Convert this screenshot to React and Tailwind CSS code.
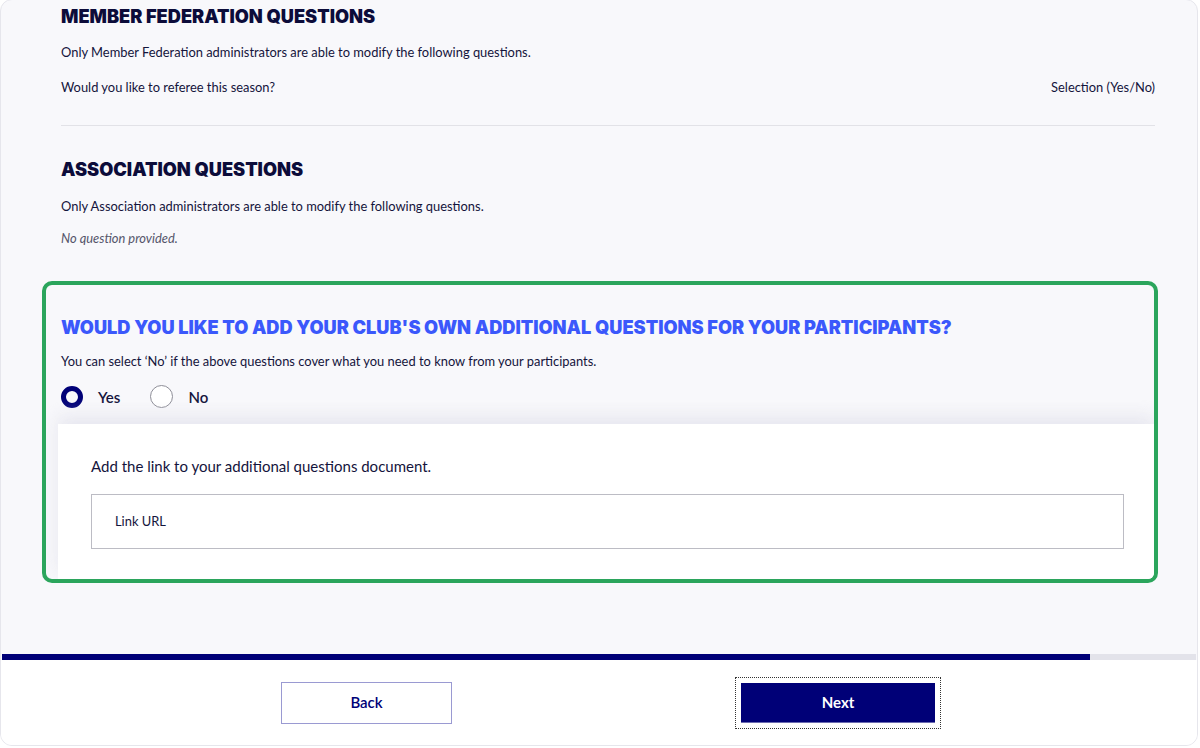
import React, { useState } from 'react';

const heading = "font-['Inter',sans-serif] font-black text-[18.2px] leading-none uppercase tracking-[0px]";

export default function App() {
  const [answer, setAnswer] = useState('yes');

  return (
    <div className="w-[1200px] h-[748px] bg-white font-['Lato',sans-serif] text-[#14143c] overflow-hidden">
      <div className="w-[1198px] h-[747px] mt-[-1px] flex flex-col bg-[#f8f8fb] border border-[#e6e6ec] rounded-[12px] overflow-hidden">
        <div className="flex-1 flex flex-col">
          <div className="pl-[60px] pr-[42px]">
            <h2 className={`${heading} text-[#0c0c3a] pt-[7px]`}>Member Federation Questions</h2>
            <p className="text-[12.9px] mt-[18px]">Only Member Federation administrators are able to modify the following questions.</p>
            <div className="flex justify-between text-[12.9px] mt-[15px]">
              <span>Would you like to referee this season?</span>
              <span>Selection (Yes/No)</span>
            </div>
            <div className="h-px bg-[#e2e2e7] mt-[28px]" />

            <h2 className={`${heading} text-[#0c0c3a] mt-[34px]`}>Association Questions</h2>
            <p className="text-[12.9px] mt-[19px]">Only Association administrators are able to modify the following questions.</p>
            <p className="text-[12.9px] italic text-[#55556a] mt-[13px]">No question provided.</p>
          </div>

          <div className="ml-[41px] mr-[39px] mt-[32px] border-[4px] border-[#2ba55c] rounded-[10px] flex flex-col overflow-hidden">
            <div className="pl-[15px] pt-[33px] pb-[16px]">
              <h2 className={`${heading} text-[#3b58fb]`}>Would you like to add your club's own additional questions for your participants?</h2>
              <p className="text-[12.9px] mt-[16px]">You can select ‘No’ if the above questions cover what you need to know from your participants.</p>
              <div className="flex items-center mt-[14px] text-[15px] font-semibold">
                <button onClick={() => setAnswer('yes')} className="flex items-center">
                  <span className={`w-[22px] h-[22px] rounded-full ${answer === 'yes' ? 'border-[5px] border-[#000077]' : 'border border-[#8e8e98]'}`} />
                  <span className="ml-[15px]">Yes</span>
                </button>
                <button onClick={() => setAnswer('no')} className="flex items-center ml-[30px]">
                  <span className={`w-[23px] h-[23px] rounded-full bg-white ${answer === 'no' ? 'border-[5px] border-[#000077]' : 'border border-[#8e8e98]'}`} />
                  <span className="ml-[15px]">No</span>
                </button>
              </div>
            </div>
            <div className="ml-[12px] bg-white shadow-[0_-8px_16px_rgba(220,220,232,0.6)] pt-[31px] pb-[30px] pl-[33px] pr-[30px]">
              <p className="text-[15px]">Add the link to your additional questions document.</p>
              <div className="mt-[16px] h-[55px] border border-[#bcbcc4] flex items-center pl-[23px] text-[12.9px]">
                Link URL
              </div>
            </div>
          </div>
        </div>

        <div className="h-[6px] bg-[#e3e3ea] mx-[1px]">
          <div className="h-full w-[1088px] bg-[#000077]" />
        </div>

        <div className="h-[85px] bg-white flex items-center">
          <button className="ml-[280px] w-[171px] h-[42px] border border-[#9a9ad2] bg-white text-[#000077] text-[15px] font-semibold">Back</button>
          <div className="ml-[283px] p-[5px] border border-dotted border-[#333]">
            <button className="w-[194px] h-[40px] bg-[#000077] text-white text-[15px] font-bold border-b border-[#6a6ab0]">Next</button>
          </div>
        </div>
      </div>
    </div>
  );
}
